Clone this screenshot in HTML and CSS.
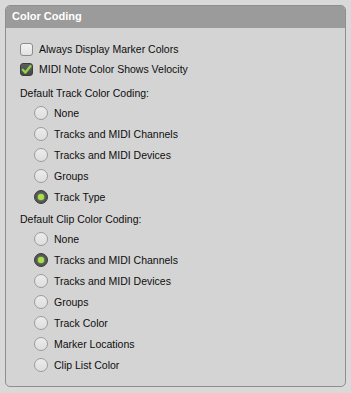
FILE: index.html
```html
<!DOCTYPE html>
<html lang="en">
<head>
    <meta charset="UTF-8">
    <title>Color Coding</title>
    <link rel="stylesheet" href="styles.css">
</head>
<body>
    <div class="panel">
        <div class="panel-header">Color Coding</div>

        <div class="panel-body">
            <!-- Checkboxes -->
            <label class="check-row">
                <span class="checkbox"></span>
                Always Display Marker Colors
            </label>
            <label class="check-row">
                <span class="checkbox checked">
                    <svg width="11" height="11" viewBox="0 0 11 11"><path d="M1.8 5.8 L4.4 8.6 L9.4 2.2" fill="none" stroke="#8fd34c" stroke-width="2.4" stroke-linecap="round" stroke-linejoin="round"/></svg>
                </span>
                MIDI Note Color Shows Velocity
            </label>

            <!-- Track color coding -->
            <div class="group-label">Default Track Color Coding:</div>
            <div class="radio-list">
                <label class="radio-row"><span class="radio"></span>None</label>
                <label class="radio-row"><span class="radio"></span>Tracks and MIDI Channels</label>
                <label class="radio-row"><span class="radio"></span>Tracks and MIDI Devices</label>
                <label class="radio-row"><span class="radio"></span>Groups</label>
                <label class="radio-row"><span class="radio selected"></span>Track Type</label>
            </div>

            <!-- Clip color coding -->
            <div class="group-label second">Default Clip Color Coding:</div>
            <div class="radio-list">
                <label class="radio-row"><span class="radio"></span>None</label>
                <label class="radio-row"><span class="radio selected"></span>Tracks and MIDI Channels</label>
                <label class="radio-row"><span class="radio"></span>Tracks and MIDI Devices</label>
                <label class="radio-row"><span class="radio"></span>Groups</label>
                <label class="radio-row"><span class="radio"></span>Track Color</label>
                <label class="radio-row"><span class="radio"></span>Marker Locations</label>
                <label class="radio-row"><span class="radio"></span>Clip List Color</label>
            </div>
        </div>
    </div>
</body>
</html>
```

FILE: styles.css
```css
body {
    margin: 0;
    padding: 5px;
    background-color: #d9d9d9;
    font-family: 'Liberation Sans', Arial, sans-serif;
    font-size: 10.5px;
    color: #0e0e0e;
}

.panel {
    width: 339px;
    border: 1px solid #8e8e8e;
    border-radius: 5px;
    background-color: #d4d4d4;
    overflow: hidden;
}

.panel-header {
    height: 22px;
    line-height: 21px;
    padding-left: 6px;
    background-color: #9b9b9b;
    color: #fff;
    font-size: 11px;
    font-weight: bold;
}

.panel-body {
    padding: 11px 0 11px 14px;
}

.check-row {
    display: flex;
    align-items: center;
    height: 20px;
}

.checkbox {
    box-sizing: border-box;
    width: 13px;
    height: 13px;
    margin-right: 6px;
    border: 1px solid #8c8c8c;
    border-radius: 3px;
    background: linear-gradient(#f3f3f3, #e2e2e2);
    display: flex;
    align-items: center;
    justify-content: center;
}

.checkbox.checked {
    border-color: #3c3c3c;
    background: linear-gradient(#5e5e5e, #474747);
}

.group-label {
    height: 18px;
    line-height: 18px;
    margin-top: 5px;
}

.group-label.second {
    margin-top: 3px;
}

.radio-list {
    padding-left: 14px;
}

.radio-row {
    display: flex;
    align-items: center;
    height: 21px;
}

.radio {
    box-sizing: border-box;
    width: 14px;
    height: 14px;
    margin-right: 6px;
    border: 1px solid #9c9c9c;
    border-radius: 50%;
    background: linear-gradient(#ececec, #dedede);
    display: flex;
    align-items: center;
    justify-content: center;
}

.radio.selected {
    border-color: #3e3e3e;
    background: #545454;
}

.radio.selected::after {
    content: "";
    width: 6px;
    height: 6px;
    border-radius: 50%;
    background-color: #a8e24a;
    box-shadow: 0 0 2px #b8f060;
}
```
